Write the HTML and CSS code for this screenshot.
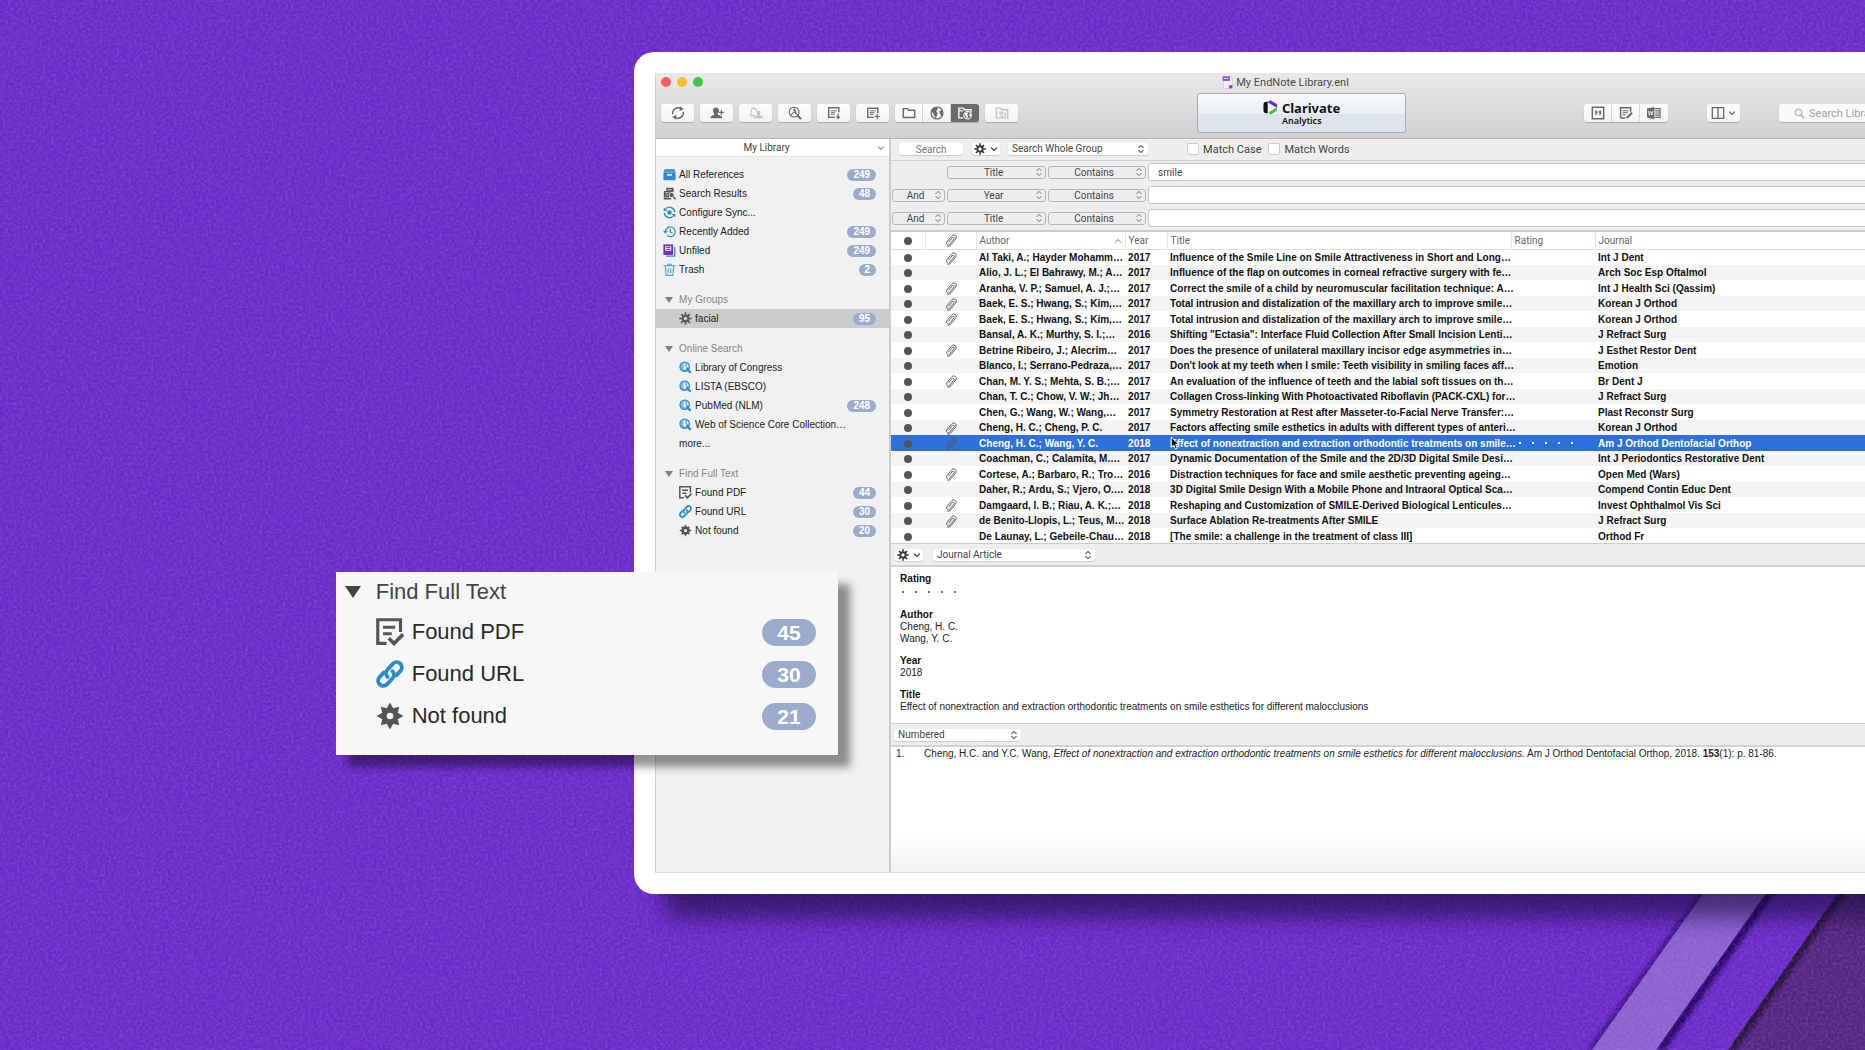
FILE: index.html
```
<!DOCTYPE html>
<html lang="en">
<head>
    <meta charset="UTF-8">
    <meta name="viewport" content="width=device-width, initial-scale=1.0">
    <title>My EndNote Library.enl</title>
    <link rel="stylesheet" href="styles.css">
</head>
<body>
    <!-- Icon sprite -->
    <svg class="sprite" aria-hidden="true">
        <symbol id="i-sync" viewBox="0 0 16 16"><path d="M2 9.500A6.200 6.200 0 0 1 11 2.700M14 6.500A6.200 6.200 0 0 1 5 13.300" fill="none" stroke="currentColor" stroke-width="1.700"/><path d="M10 .3l4.500 3.200L10 6zM6 15.700l-4.500-3.200L6 10z" fill="currentColor"/></symbol>
        <symbol id="i-adduser" viewBox="0 0 16 16"><path d="M6.800 1.600c2.200 0 3.500 1.600 3.500 3.600 0 1.500-.7 2.700-1.500 3.400v1.200l4 1.600c.9.4 1.200 1.200 1.200 2.600H.8c0-1.400.2-2.200 1.200-2.600L4.800 9.800V8.600C4 7.900 3.300 6.700 3.300 5.200c0-2 1.300-3.600 3.500-3.600z" fill="currentColor"/><path d="M13 4.500v5.500M10.300 7.200h5.500" stroke="currentColor" stroke-width="1.400"/></symbol>
        <symbol id="i-bell" viewBox="0 0 16 16"><path d="M1 11c1.500-1.500 1.300-3 1.500-5C2.700 3.500 4 2.500 5.500 2.500S8.300 3.500 8.500 6M1 11h6M4.500 13.200h2M5.500 1v1.500" fill="none" stroke="currentColor" stroke-width="1.300"/><path d="M11 5.500c1.300 0 2.100 1 2.100 2.200 0 1-.4 1.700-.9 2.100v.7l2.700 1c.8.300 1.100 1 1.100 2.500H6.500c0-1.500.3-2.200 1.100-2.500l2.200-1v-.7c-.5-.4-.9-1.100-.9-2.100 0-1.200.8-2.200 2.100-2.200z" fill="currentColor"/></symbol>
        <symbol id="i-find" viewBox="0 0 16 16"><g fill="none" stroke="currentColor"><circle cx="7" cy="7" r="5.600" stroke-width="1.300"/><path d="M7 1.500V7L2.500 11M7 7l4.500 3.500M7 3.500c2 1.500 2.500 3.500 2 5" stroke-width="1.200"/><path d="M10.500 10.500l4.500 4.500" stroke-width="2.400"/></g></symbol>
        <symbol id="i-docdown" viewBox="0 0 16 16"><g fill="none" stroke="currentColor"><path d="M9 13H2V2h11.500v5" stroke-width="1.600"/><path d="M4.500 5.500H11M4.500 7.500H9M4.500 9.500h4" stroke-width="1.100"/><path d="M12.800 8.500v5.500M10.800 12l2 2.200 2-2.200" stroke-width="1.300"/></g></symbol>
        <symbol id="i-docplus" viewBox="0 0 16 16"><g fill="none" stroke="currentColor"><path d="M9 13H2V2.500h11.500V8" stroke-width="1.600"/><path d="M4.500 5.500H11M4.500 7.500h5M4.500 9.500h4" stroke-width="1.100"/><path d="M12.800 9v6M9.800 12h6" stroke-width="1.400"/></g></symbol>
        <symbol id="i-folder" viewBox="0 0 16 16"><path d="M1.500 13.200V3h4.800l1.400 1.800h6.800v8.400z" fill="none" stroke="currentColor" stroke-width="1.700" stroke-linejoin="round"/></symbol>
        <symbol id="i-globe" viewBox="0 0 16 16"><circle cx="8" cy="8" r="6.800" fill="none" stroke="currentColor" stroke-width="1.500"/><path d="M2 5.500C3.200 3 5.500 1.600 8.200 1.800L9 4 6.800 5.800l2 2.200-.8 3-1.500 3L5 11 3.500 8.500zM10.500 6l3-1.500c1.200 2.500 1 5-.8 7.200l-1.500-2.900z" fill="currentColor"/></symbol>
        <symbol id="i-folderglobe" viewBox="0 0 16 16"><path d="M6 13.500H1V2.500h5l1.400 1.800H15v3" fill="none" stroke="currentColor" stroke-width="1.500"/><path d="M1 5.500h5" stroke="currentColor" stroke-width="1.300"/><circle cx="11" cy="10.500" r="4.300" fill="none" stroke="currentColor" stroke-width="1.200"/><path d="M7.500 8.500l3-1.500 1.200 1.500-1.500 1.300 1.600 1.700-1.300 2.700-1.700-2zM12.800 9l1.900-.5v3l-1.400.7z" fill="currentColor"/></symbol>
        <symbol id="i-folderdoc" viewBox="0 0 16 16"><path d="M1.500 13.500v-11h4.800l1.400 1.800h6.800v9.200z" fill="none" stroke="currentColor" stroke-width="1.500"/><path d="M4 7h5M4 9.200h2M7 8.200h5v3.300H7z" fill="none" stroke="currentColor" stroke-width="1.200"/></symbol>
        <symbol id="i-quote" viewBox="0 0 16 16"><path d="M1.500 1.500h13v13h-13z" fill="none" stroke="currentColor" stroke-width="1.700"/><path d="M4.600 5.500h2.600V8c0 1.500-.8 2.300-2.300 2.500V9.300c.6-.1.900-.5.900-1H4.600zM9 5.500h2.600V8c0 1.500-.8 2.300-2.300 2.500V9.300c.6-.1.900-.5.900-1H9z" fill="currentColor"/></symbol>
        <symbol id="i-edit" viewBox="0 0 16 16"><path d="M7 13.800H2.500L1.800 13V2h11.500v4.500" fill="none" stroke="currentColor" stroke-width="1.700"/><path d="M4 5.500h7M4 7.700h6M4 9.900h3.500" stroke="currentColor" stroke-width="1.200"/><path d="M14 6.800l1.800 1.800-5.300 5.200-2.500.9.700-2.600z" fill="currentColor"/></symbol>
        <symbol id="i-word" viewBox="0 0 16 16"><path d="M0 2.800L8.500 1v14L0 13.200z" fill="currentColor"/><path d="M1.500 5.500l1.200 5 1.500-4.500 1.500 4.500 1.200-5" fill="none" stroke="#f4f4f4" stroke-width="1"/><path d="M9 3h6v10H9M9.500 5.500H14M9.500 8H15M9.500 10.500H14" fill="none" stroke="currentColor" stroke-width="1.300"/></symbol>
        <symbol id="i-columns" viewBox="0 0 16 16"><path d="M1.500 1.800h13v12.400h-13zM8 2v12" fill="none" stroke="currentColor" stroke-width="1.500"/></symbol>
        <symbol id="i-search" viewBox="0 0 16 16"><path d="M10.200 10.200l4.600 4.600" stroke="currentColor" stroke-width="1.500"/><circle cx="6.500" cy="6.500" r="5" fill="none" stroke="currentColor" stroke-width="1.300"/></symbol>
        <symbol id="i-chevron" viewBox="0 0 8 8"><path d="M1.200 2.600L4 5.400l2.800-2.800" fill="none" stroke="currentColor" stroke-width="1.300"/></symbol>
        <symbol id="i-updown" viewBox="0 0 8 10"><path d="M1.500 3.800L4 1.400l2.500 2.400M1.500 6.200L4 8.600l2.500-2.400" fill="none" stroke="currentColor" stroke-width="1.100"/></symbol>
        <symbol id="i-gear" viewBox="0 0 16 16"><circle cx="8" cy="8" r="3.600" fill="none" stroke="currentColor" stroke-width="2.600"/><path d="M8 .3v3.200M8 12.500v3.200M.3 8h3.200M12.500 8h3.200M2.600 2.600l2.200 2.200M11.200 11.200l2.200 2.200M13.400 2.600l-2.200 2.200M4.800 11.200l-2.200 2.200" stroke="currentColor" stroke-width="2"/></symbol>
        <symbol id="i-star" viewBox="0 0 16 16"><path fill="currentColor" fill-rule="evenodd" d="M8 .3l1.800 3.300 3.500-.9-.9 3.500L15.700 8l-3.300 1.800.9 3.500-3.500-.9L8 15.700l-1.800-3.300-3.500.9.900-3.500L.3 8l3.300-1.800-.9-3.500 3.500.9zM8 6.100a1.900 1.900 0 1 0 0 3.800 1.900 1.900 0 0 0 0-3.800z"/></symbol>
        <symbol id="i-box" viewBox="0 0 16 16"><path d="M2 1.500h12l1.500 3H.5zM.5 5.300h15V14q0 1-1 1h-13q-1 0-1-1z" fill="#2e8bcb"/><path d="M5 8.500h6" stroke="#fff" stroke-width="1.800"/></symbol>
        <symbol id="i-results" viewBox="0 0 16 16"><path d="M4 1h9v5a4.500 4.500 0 0 0-5 7H1V5h3z" fill="#555"/><path d="M5.500 3.500h5M3 7h4M3 10h3" stroke="#f1f1f1"/><circle cx="10.500" cy="9.800" r="3" fill="#555" stroke="#f1f1f1" stroke-width=".8"/><path d="M12.500 12l3 3M1 14.500h9" stroke="#555" stroke-width="1.800"/></symbol>
        <symbol id="i-configure" viewBox="0 0 16 16"><path d="M3.600 3.300a6.400 6.400 0 0 1 10.800 4.200M12.400 12.700a6.400 6.400 0 0 1-10.800-4.200" fill="none" stroke="#2e8bcb" stroke-width="1.600"/><path d="M.8 1.500v4.700h4.700zM15.200 14.500V9.800h-4.700z" fill="#2e8bcb"/><circle cx="8" cy="8" r="2.800" fill="#2e8bcb"/></symbol>
        <symbol id="i-recent" viewBox="0 0 16 16"><path d="M3 8.500A6 6 0 1 1 5 12.800M9 4.500v4l2.800 1.700" fill="none" stroke="#2e8bcb" stroke-width="1.500"/><path d="M0 7h6l-3 3.700z" fill="#2e8bcb"/></symbol>
        <symbol id="i-unfiled" viewBox="0 0 16 16"><path d="M14.500 4v11H4" fill="none" stroke="#2e8bcb" stroke-width="1.600"/><path d="M.5.500h12v13H.5z" fill="#6b35b0"/><path d="M3.200 3.200h6.600v4.600H3.200zM3.200 5.500h6.600" fill="none" stroke="#fff" stroke-width="1"/></symbol>
        <symbol id="i-trash" viewBox="0 0 16 16"><path d="M.5 3.500h15M6 3V1.500h4V3M2.800 3.500l1 11.700h8.400l1-11.700M6.500 6.500v6M9.500 6.500v6" fill="none" stroke="#4ba0d8" stroke-width="1.300"/></symbol>
        <symbol id="i-online" viewBox="0 0 16 16"><circle cx="7" cy="7" r="6.200" fill="#7dbfe6"/><circle cx="7" cy="7" r="5.800" fill="none" stroke="#2e8bcb" stroke-width="1.400"/><path d="M6 3.500l1.500-.5v4L9.500 9 8 11 5.500 8.500zM10 4l1.500 1v3l-1.500-1z" fill="#fff"/><path d="M9 9l5.500 5.500" stroke="#2e8bcb" stroke-width="2.800"/></symbol>
        <symbol id="i-pdf" viewBox="0 0 16 16"><path d="M6 14.500H1V1h13v7" fill="none" stroke="#555" stroke-width="1.800"/><path d="M4 5.300h7M4 9h5" stroke="#555" stroke-width="1.700"/><path d="M7.300 11.600l3 3 5.200-5.300" fill="none" stroke="#555" stroke-width="2"/></symbol>
        <symbol id="i-link" viewBox="0 0 16 16"><g fill="none" stroke="#2e8bcb" stroke-width="2.200" stroke-linecap="round"><path d="M6.600 9.600a2.900 2.900 0 0 1 0-4.100l3-3.300a2.900 2.900 0 0 1 4.400 4L11.600 8.800"/><path d="M9.400 6.400a2.900 2.900 0 0 1 0 4.100l-3 3.300a2.900 2.900 0 0 1-4.400-4L4.400 7.200"/></g></symbol>
        <symbol id="i-clip" viewBox="0 0 12 13"><path d="M3.500 8.300L7.300 3.600a1 1 0 0 1 1.700 1.300L4.800 10.200a1.900 1.900 0 0 1-3-2.300L6.700 1.900a2.500 2.500 0 0 1 4 3.100L6 10.800c-1 1.300-2.600 1.800-3.800 1.200" fill="none" stroke="currentColor" stroke-width=".9"/></symbol>
        <symbol id="i-file" viewBox="0 0 16 16"><path d="M3 1h9l2 3v11.500H3z" fill="#f4f1fb" stroke="#c9bde6" stroke-width=".8"/><path d="M2 .5h9v5.500H2z" fill="#8a4be0"/><path d="M3.500 3h6" stroke="#fff"/><path d="M9 12l5-1v3l-3 2z" fill="#7a3be0"/></symbol>
        <symbol id="i-clarivate" viewBox="0 0 16 16"><path d="M5 2v12c-3 .5-4.500-.5-4.500-3V5C.5 2.500 2 1.500 5 2z" fill="#111"/><path d="M4.500 2L8 .2l7 4.300v3.800L11.200 6 8 4.200z" fill="#7a22e8"/><path d="M6 13l5-2.800 3.800-2.200v3.500L8 15.800z" fill="#45c520"/></symbol>
        <symbol id="i-sort" viewBox="0 0 8 8"><path d="M1 5.500L4 2.500l3 3" fill="none" stroke="currentColor"/></symbol>
    </svg>

    <!-- Diagonal ribbons, then paper grain over the whole background -->
    <svg class="ribbons" width="300" height="170" viewBox="0 0 300 170" aria-hidden="true">
        <filter id="soft" x="-20%" y="-20%" width="140%" height="140%"><feGaussianBlur stdDeviation="2.5"/></filter>
        <path d="M282 0h18v170H163z" fill="#54247f"/>
        <path d="M285 0L166 170" stroke="#150828" stroke-width="7" filter="url(#soft)"/>
        <path d="M148 0h134L163 170H27z" fill="#6b29c8"/>
        <path d="M214 0L95 170" stroke="#1c0058" stroke-width="8" filter="url(#soft)"/>
        <path d="M147 0L26 170" stroke="#2a0b70" stroke-width="5" filter="url(#soft)"/>
        <path d="M148 0h62L91 170H27z" fill="#8d60d0"/>
    </svg>
    <svg class="texture" aria-hidden="true">
        <filter id="grain" x="0" y="0" width="100%" height="100%">
            <feTurbulence type="fractalNoise" baseFrequency="0.35" numOctaves="4" seed="4"/>
            <feColorMatrix values="0 0 0 0 0.6  0 0 0 0 0.4  0 0 0 0 1  1.2 0 0 0 -0.4"/>
        </filter>
        <rect width="100%" height="100%" filter="url(#grain)"/>
    </svg>

    <main class="frame">
        <div class="window">
            <header class="titlebar">
                <div class="title-row">
                    <div class="lights"><span class="light red"></span><span class="light yellow"></span><span class="light green"></span></div>
                    <div class="doc-title"><svg class="icon"><use href="#i-file"/></svg><span>My EndNote Library.enl</span></div>
                </div>
                <div class="toolbar">
                    <div class="tools">
                        <button class="tool" aria-label="Sync"><svg class="icon"><use href="#i-sync"/></svg></button>
                        <button class="tool" aria-label="Share library"><svg class="icon"><use href="#i-adduser"/></svg></button>
                        <button class="tool" aria-label="Activity" disabled><svg class="icon"><use href="#i-bell"/></svg></button>
                        <button class="tool" aria-label="Find full text"><svg class="icon"><use href="#i-find"/></svg></button>
                        <button class="tool" aria-label="Import"><svg class="icon"><use href="#i-docdown"/></svg></button>
                        <button class="tool" aria-label="New reference"><svg class="icon"><use href="#i-docplus"/></svg></button>
                        <div class="segment">
                            <button class="tool" aria-label="Local library"><svg class="icon"><use href="#i-folder"/></svg></button>
                            <button class="tool" aria-label="Online search"><svg class="icon"><use href="#i-globe"/></svg></button>
                            <button class="tool active" aria-label="Integrated library"><svg class="icon"><use href="#i-folderglobe"/></svg></button>
                        </div>
                        <button class="tool" aria-label="Open folder" disabled><svg class="icon"><use href="#i-folderdoc"/></svg></button>
                    </div>
                    <div class="brand">
                        <svg class="icon"><use href="#i-clarivate"/></svg>
                        <div class="brand-name">Clarivate<small>Analytics</small></div>
                    </div>
                    <div class="tools right">
                        <div class="segment">
                            <button class="tool" aria-label="Insert citation"><svg class="icon"><use href="#i-quote"/></svg></button>
                            <button class="tool" aria-label="Format bibliography"><svg class="icon"><use href="#i-edit"/></svg></button>
                            <button class="tool" aria-label="Go to Word"><svg class="icon"><use href="#i-word"/></svg></button>
                        </div>
                        <button class="tool layout" aria-label="Layout"><svg class="icon"><use href="#i-columns"/></svg><svg class="chevron"><use href="#i-chevron"/></svg></button>
                        <label class="search-box"><svg class="icon"><use href="#i-search"/></svg><input type="text" placeholder="Search Library" aria-label="Search Library"></label>
                    </div>
                </div>
            </header>

            <div class="content">
                <aside class="sidebar">
                    <button class="library">My Library<svg class="chevron"><use href="#i-chevron"/></svg></button>
                    <ul class="list top">
                        <li><svg class="icon"><use href="#i-box"/></svg>All References<span class="badge">249</span></li>
                        <li><svg class="icon"><use href="#i-results"/></svg>Search Results<span class="badge">48</span></li>
                        <li><svg class="icon"><use href="#i-configure"/></svg>Configure Sync...</li>
                        <li><svg class="icon"><use href="#i-recent"/></svg>Recently Added<span class="badge">249</span></li>
                        <li><svg class="icon"><use href="#i-unfiled"/></svg>Unfiled<span class="badge">249</span></li>
                        <li><svg class="icon"><use href="#i-trash"/></svg>Trash<span class="badge">2</span></li>
                    </ul>
                    <h2 class="group">My Groups</h2>
                    <ul class="list nested">
                        <li class="current"><svg class="icon dark"><use href="#i-gear"/></svg>facial<span class="badge">95</span></li>
                    </ul>
                    <h2 class="group">Online Search</h2>
                    <ul class="list nested">
                        <li><svg class="icon"><use href="#i-online"/></svg>Library of Congress</li>
                        <li><svg class="icon"><use href="#i-online"/></svg>LISTA (EBSCO)</li>
                        <li><svg class="icon"><use href="#i-online"/></svg>PubMed (NLM)<span class="badge">248</span></li>
                        <li><svg class="icon"><use href="#i-online"/></svg>Web of Science Core Collection…</li>
                        <li>more...</li>
                    </ul>
                    <h2 class="group">Find Full Text</h2>
                    <ul class="list nested">
                        <li><svg class="icon"><use href="#i-pdf"/></svg>Found PDF<span class="badge">44</span></li>
                        <li><svg class="icon"><use href="#i-link"/></svg>Found URL<span class="badge">30</span></li>
                        <li><svg class="icon dark"><use href="#i-star"/></svg>Not found<span class="badge">20</span></li>
                    </ul>
                </aside>

                <section class="main">
                    <div class="search-bar">
                        <button class="small search-btn">Search</button>
                        <button class="small gear" aria-label="Search options"><svg class="icon"><use href="#i-gear"/></svg><svg class="chevron"><use href="#i-chevron"/></svg></button>
                        <div class="select scope"><select aria-label="Search scope"><option>Search Whole Group</option></select><svg><use href="#i-updown"/></svg></div>
                        <label class="check"><input type="checkbox">Match Case</label>
                        <label class="check"><input type="checkbox">Match Words</label>
                    </div>
                    <div class="criteria">
                        <div class="select outline field"><select aria-label="Field 1"><option>Title</option></select><svg><use href="#i-updown"/></svg></div>
                        <div class="select outline"><select aria-label="Comparison 1"><option>Contains</option></select><svg><use href="#i-updown"/></svg></div>
                        <input type="text" value="smile" aria-label="Search term 1">
                        <div class="select outline"><select aria-label="Operator 2"><option>And</option></select><svg><use href="#i-updown"/></svg></div>
                        <div class="select outline"><select aria-label="Field 2"><option>Year</option></select><svg><use href="#i-updown"/></svg></div>
                        <div class="select outline"><select aria-label="Comparison 2"><option>Contains</option></select><svg><use href="#i-updown"/></svg></div>
                        <input type="text" aria-label="Search term 2">
                        <div class="select outline"><select aria-label="Operator 3"><option>And</option></select><svg><use href="#i-updown"/></svg></div>
                        <div class="select outline"><select aria-label="Field 3"><option>Title</option></select><svg><use href="#i-updown"/></svg></div>
                        <div class="select outline"><select aria-label="Comparison 3"><option>Contains</option></select><svg><use href="#i-updown"/></svg></div>
                        <input type="text" aria-label="Search term 3">
                    </div>

                    <div class="references">
                        <table>
                            <colgroup>
                                <col class="c-dot"><col class="c-clip"><col class="c-author"><col class="c-year"><col class="c-title"><col class="c-rating"><col>
                            </colgroup>
                            <thead>
                                <tr><th><i class="dot"></i></th><th><svg class="clip"><use href="#i-clip"/></svg></th><th>Author<svg class="sort"><use href="#i-sort"/></svg></th><th>Year</th><th>Title</th><th>Rating</th><th>Journal</th></tr>
                            </thead>
                            <tbody>
                                <tr><td><i class="dot"></i></td><td><svg class="clip"><use href="#i-clip"/></svg></td><td>Al Taki, A.; Hayder Mohamm…</td><td>2017</td><td>Influence of the Smile Line on Smile Attractiveness in Short and Long…</td><td></td><td>Int J Dent</td></tr>
                                <tr><td><i class="dot"></i></td><td></td><td>Alio, J. L.; El Bahrawy, M.; A…</td><td>2017</td><td>Influence of the flap on outcomes in corneal refractive surgery with fe…</td><td></td><td>Arch Soc Esp Oftalmol</td></tr>
                                <tr><td><i class="dot"></i></td><td><svg class="clip"><use href="#i-clip"/></svg></td><td>Aranha, V. P.; Samuel, A. J.;…</td><td>2017</td><td>Correct the smile of a child by neuromuscular facilitation technique: A…</td><td></td><td>Int J Health Sci (Qassim)</td></tr>
                                <tr><td><i class="dot"></i></td><td><svg class="clip"><use href="#i-clip"/></svg></td><td>Baek, E. S.; Hwang, S.; Kim,…</td><td>2017</td><td>Total intrusion and distalization of the maxillary arch to improve smile…</td><td></td><td>Korean J Orthod</td></tr>
                                <tr><td><i class="dot"></i></td><td><svg class="clip"><use href="#i-clip"/></svg></td><td>Baek, E. S.; Hwang, S.; Kim,…</td><td>2017</td><td>Total intrusion and distalization of the maxillary arch to improve smile…</td><td></td><td>Korean J Orthod</td></tr>
                                <tr><td><i class="dot"></i></td><td></td><td>Bansal, A. K.; Murthy, S. I.;…</td><td>2016</td><td>Shifting "Ectasia": Interface Fluid Collection After Small Incision Lenti…</td><td></td><td>J Refract Surg</td></tr>
                                <tr><td><i class="dot"></i></td><td><svg class="clip"><use href="#i-clip"/></svg></td><td>Betrine Ribeiro, J.; Alecrim…</td><td>2017</td><td>Does the presence of unilateral maxillary incisor edge asymmetries in…</td><td></td><td>J Esthet Restor Dent</td></tr>
                                <tr><td><i class="dot"></i></td><td></td><td>Blanco, I.; Serrano-Pedraza,…</td><td>2017</td><td>Don't look at my teeth when I smile: Teeth visibility in smiling faces aff…</td><td></td><td>Emotion</td></tr>
                                <tr><td><i class="dot"></i></td><td><svg class="clip"><use href="#i-clip"/></svg></td><td>Chan, M. Y. S.; Mehta, S. B.;…</td><td>2017</td><td>An evaluation of the influence of teeth and the labial soft tissues on th…</td><td></td><td>Br Dent J</td></tr>
                                <tr><td><i class="dot"></i></td><td></td><td>Chan, T. C.; Chow, V. W.; Jh…</td><td>2017</td><td>Collagen Cross-linking With Photoactivated Riboflavin (PACK-CXL) for…</td><td></td><td>J Refract Surg</td></tr>
                                <tr><td><i class="dot"></i></td><td></td><td>Chen, G.; Wang, W.; Wang,…</td><td>2017</td><td>Symmetry Restoration at Rest after Masseter-to-Facial Nerve Transfer:…</td><td></td><td>Plast Reconstr Surg</td></tr>
                                <tr><td><i class="dot"></i></td><td><svg class="clip"><use href="#i-clip"/></svg></td><td>Cheng, H. C.; Cheng, P. C.</td><td>2017</td><td>Factors affecting smile esthetics in adults with different types of anteri…</td><td></td><td>Korean J Orthod</td></tr>
                                <tr class="selected"><td><i class="dot"></i></td><td><svg class="clip"><use href="#i-clip"/></svg></td><td>Cheng, H. C.; Wang, Y. C.</td><td>2018</td><td>Effect of nonextraction and extraction orthodontic treatments on smile…<svg class="cursor" viewBox="0 0 10 16"><path d="M1 1v11l2.700-2.300L5.500 14l2-.8-1.800-4.100H9z" fill="#111" stroke="#fff"/></svg></td><td><div class="stars"><i></i><i></i><i></i><i></i><i></i></div></td><td>Am J Orthod Dentofacial Orthop</td></tr>
                                <tr><td><i class="dot"></i></td><td></td><td>Coachman, C.; Calamita, M.…</td><td>2017</td><td>Dynamic Documentation of the Smile and the 2D/3D Digital Smile Desi…</td><td></td><td>Int J Periodontics Restorative Dent</td></tr>
                                <tr><td><i class="dot"></i></td><td><svg class="clip"><use href="#i-clip"/></svg></td><td>Cortese, A.; Barbaro, R.; Tro…</td><td>2016</td><td>Distraction techniques for face and smile aesthetic preventing ageing…</td><td></td><td>Open Med (Wars)</td></tr>
                                <tr><td><i class="dot"></i></td><td></td><td>Daher, R.; Ardu, S.; Vjero, O.…</td><td>2018</td><td>3D Digital Smile Design With a Mobile Phone and Intraoral Optical Sca…</td><td></td><td>Compend Contin Educ Dent</td></tr>
                                <tr><td><i class="dot"></i></td><td><svg class="clip"><use href="#i-clip"/></svg></td><td>Damgaard, I. B.; Riau, A. K.;…</td><td>2018</td><td>Reshaping and Customization of SMILE-Derived Biological Lenticules…</td><td></td><td>Invest Ophthalmol Vis Sci</td></tr>
                                <tr><td><i class="dot"></i></td><td><svg class="clip"><use href="#i-clip"/></svg></td><td>de Benito-Llopis, L.; Teus, M…</td><td>2018</td><td>Surface Ablation Re-treatments After SMILE</td><td></td><td>J Refract Surg</td></tr>
                                <tr><td><i class="dot"></i></td><td></td><td>De Launay, L.; Gebeile-Chau…</td><td>2018</td><td>[The smile: a challenge in the treatment of class III]</td><td></td><td>Orthod Fr</td></tr>
                            </tbody>
                        </table>
                    </div>

                    <div class="pane-bar">
                        <button class="small gear" aria-label="Reference options"><svg class="icon"><use href="#i-gear"/></svg><svg class="chevron"><use href="#i-chevron"/></svg></button>
                        <div class="select type"><select aria-label="Reference type"><option>Journal Article</option></select><svg><use href="#i-updown"/></svg></div>
                    </div>
                    <dl class="details">
                        <dt>Rating</dt>
                        <dd><div class="stars"><i></i><i></i><i></i><i></i><i></i></div></dd>
                        <dt>Author</dt>
                        <dd>Cheng, H. C.<br>Wang, Y. C.</dd>
                        <dt>Year</dt>
                        <dd>2018</dd>
                        <dt>Title</dt>
                        <dd>Effect of nonextraction and extraction orthodontic treatments on smile esthetics for different malocclusions</dd>
                    </dl>
                    <div class="pane-bar">
                        <div class="select style"><select aria-label="Output style"><option>Numbered</option></select><svg><use href="#i-updown"/></svg></div>
                    </div>
                    <div class="citation">
                        <span class="number">1.</span>
                        <p>Cheng, H.C. and Y.C. Wang, <em>Effect of nonextraction and extraction orthodontic treatments on smile esthetics for different malocclusions.</em> Am J Orthod Dentofacial Orthop, 2018. <b>153</b>(1): p. 81-86.</p>
                    </div>
                </section>
            </div>
        </div>
    </main>

    <!-- Enlarged callout -->
    <aside class="callout">
        <h2>Find Full Text</h2>
        <ul>
            <li><svg class="icon"><use href="#i-pdf"/></svg>Found PDF<span class="badge">45</span></li>
            <li><svg class="icon"><use href="#i-link"/></svg>Found URL<span class="badge">30</span></li>
            <li><svg class="icon dark"><use href="#i-star"/></svg>Not found<span class="badge">21</span></li>
        </ul>
    </aside>
</body>
</html>
```
FILE: styles.css
```
* {
    box-sizing: border-box;
}
body {
    position: relative;
    margin: 0;
    min-height: 100vh;
    padding-top: 52px;
    overflow: hidden;
    background-color: #6b29c8;
    font-family: "Liberation Sans", Arial, sans-serif;
    font-size: 10px;
    color: #222222;
}
ul, dl, dd, p, h2 {
    margin: 0;
    padding: 0;
    list-style: none;
}
button, input, select {
    margin: 0;
    border: none;
    font-family: Roboto, sans-serif;
    font-size: 10px;
    color: #444444;
}
.sprite {
    position: absolute;
    width: 0;
    height: 0;
}
.texture {
    position: absolute;
    top: 0;
    left: 0;
    width: 100%;
    height: 100%;
    opacity: 0.3;
}
.ribbons {
    position: absolute;
    right: 0;
    bottom: 0;
}
.icon {
    width: 13px;
    height: 13px;
    flex: none;
}
.icon.dark {
    color: #555555;
}
.chevron {
    width: 8px;
    height: 8px;
}

/* Window */
.frame {
    position: relative;
    margin: 0 -103px 0 34%;
    padding: 21px;
    background-color: #ffffff;
    border-radius: 20px;
    box-shadow: 28px 24px 22px rgba(24, 12, 60, 0.6);
}
.window {
    border-left: 1px solid #d4d0e4;
    border-bottom: 1px solid #dddddd;
}
.titlebar {
    height: 66px;
    background: linear-gradient(#e9e9e9, #d1d1d1);
    border-bottom: 1px solid #b4b4b4;
}
.title-row {
    display: grid;
    grid-template-columns: 1fr auto 1fr;
    align-items: center;
    height: 20px;
    padding: 0 0 2px 5px;
}
.lights {
    display: flex;
    gap: 6px;
}
.light {
    width: 10px;
    height: 10px;
    border-radius: 50%;
}
.red {
    background-color: #f9605a;
}
.yellow {
    background-color: #f6be2f;
}
.green {
    background-color: #3bc945;
}
.doc-title {
    display: flex;
    align-items: center;
    gap: 2px;
    padding-right: 38px;
    font-family: Roboto, sans-serif;
    font-size: 11px;
    color: #4a4a4a;
}
.toolbar {
    display: grid;
    grid-template-columns: 1fr 209px 1fr;
    align-items: center;
    height: 40px;
    padding: 0 5px;
}
.tools {
    display: flex;
    gap: 6px;
}
.tool {
    display: flex;
    align-items: center;
    justify-content: center;
    width: 33px;
    height: 18px;
    padding: 0;
    border-radius: 3px;
    background: linear-gradient(#fdfdfd, #f3f3f3);
    box-shadow: 0 1px 1px rgba(0, 0, 0, 0.2);
    color: #6a6a6a;
}
.tool .icon {
    width: 14px;
    height: 14px;
}
.tool:disabled {
    color: #c4c4c4;
}
.segment {
    display: flex;
}
.segment .tool {
    width: 28px;
    border-right: 1px solid #dddddd;
    border-radius: 0;
}
.segment .tool:first-child {
    border-radius: 3px 0 0 3px;
}
.segment .tool:last-child {
    border-right: none;
    border-radius: 0 3px 3px 0;
}
.segment .tool.active {
    background: #6a6a6a;
    color: #ffffff;
}
.tool.layout {
    gap: 3px;
    margin-left: 33px;
}
.brand {
    display: flex;
    justify-content: center;
    gap: 4px;
    height: 40px;
    padding-top: 6px;
    border: 1px solid #a9adb3;
    border-radius: 3px;
    background: linear-gradient(#f6f9fc, #eaeff5 52%, #dfe4ec 53%, #dde4ec);
    font-family: "Noto Sans", sans-serif;
    color: #111111;
}
.brand .icon {
    width: 15px;
    height: 15px;
}
.brand-name {
    font-size: 13px;
    font-weight: bold;
    line-height: 17px;
}
.brand-name small {
    display: block;
    font-size: 9px;
    font-weight: 600;
    line-height: 8px;
}
.tools.right {
    padding-left: 178px;
}
.search-box {
    display: flex;
    flex: 1;
    align-items: center;
    gap: 4px;
    height: 18px;
    margin-left: 33px;
    padding-left: 15px;
    border-radius: 3px;
    background-color: #fafafa;
    box-shadow: 0 1px 1px rgba(0, 0, 0, 0.2);
    color: #999999;
}
.search-box .icon {
    width: 11px;
    height: 11px;
}
.search-box input {
    width: 100px;
    padding: 0;
    background: none;
    font-size: 11px;
}
.search-box input::placeholder {
    color: #a0a0a0;
}
.content {
    display: grid;
    grid-template-columns: 235px 1fr;
}

/* Sidebar */
.sidebar {
    border-right: 2px solid #cccccc;
    background-color: #f1f1f1;
}
.library {
    display: grid;
    grid-template-columns: 1fr auto;
    align-items: center;
    width: 100%;
    height: 18px;
    padding: 0 4px 0 0;
    border-bottom: 1px solid #e4e4e4;
    background-color: #ffffff;
}
.library .chevron {
    color: #999999;
}
.list li {
    display: flex;
    align-items: center;
    gap: 3px;
    height: 19px;
    padding: 0 13px 0 7px;
}
.list.top {
    padding-top: 8px;
}
.list.nested li {
    padding-left: 23px;
}
.list .current {
    background-color: #cccccc;
}
.badge {
    margin-left: auto;
    padding: 0 6px;
    border-radius: 20px;
    background-color: #9aabcb;
    color: #ffffff;
    font-weight: bold;
    line-height: 12px;
}
.group {
    display: flex;
    align-items: center;
    gap: 6px;
    height: 19px;
    margin-top: 11px;
    padding-left: 9px;
    color: #858585;
    font-size: 10px;
    font-weight: normal;
}
.group::before, .callout h2::before {
    content: "";
    border: 4px solid transparent;
    border-top: 6px solid #808080;
    border-bottom: none;
}

/* Search controls */
.search-bar {
    display: flex;
    align-items: center;
    height: 22px;
    padding: 0 0 1px 8px;
    border-bottom: 1px solid #cfcfcf;
    background-color: #eeeeee;
}
.small {
    height: 12px;
    padding: 0;
    border-radius: 3px;
    background-color: #ffffff;
    box-shadow: 0 1px 1px rgba(0, 0, 0, 0.15);
}
.search-btn {
    width: 64px;
    margin-right: 9px;
    color: #777777;
}
.gear {
    display: flex;
    align-items: center;
    justify-content: center;
    gap: 4px;
    width: 28px;
    margin-right: 8px;
    color: #333333;
}
.gear .icon {
    width: 12px;
    height: 12px;
}
.select {
    display: grid;
    align-items: center;
}
.select > * {
    grid-area: 1 / 1;
}
.select svg {
    justify-self: end;
    width: 8px;
    height: 10px;
    margin-right: 3px;
    color: #555555;
    pointer-events: none;
}
select {
    width: 100%;
    height: 12px;
    padding: 0 4px;
    border-radius: 3px;
    background-color: #ffffff;
    box-shadow: 0 1px 1px rgba(0, 0, 0, 0.15);
    line-height: 12px;
    appearance: none;
}
.scope {
    width: 140px;
    margin-right: 39px;
}
.check {
    display: flex;
    align-items: center;
    gap: 4px;
    margin-right: 7px;
    font-family: Roboto, sans-serif;
    font-size: 11px;
    color: #444444;
}
.check input {
    width: 12px;
    height: 12px;
    border: 1px solid #cccccc;
    border-radius: 2px;
    background-color: #ffffff;
    appearance: none;
}
.criteria {
    display: grid;
    grid-template-columns: 53px 99px 98px 1fr;
    gap: 5px 2px;
    padding: 2px 0 3px 1px;
    border-bottom: 2px solid #cccccc;
    background-color: #eeeeee;
}
.criteria .field {
    grid-column: 2;
}
.criteria input {
    height: 18px;
    padding: 0 9px;
    border: 1px solid #c6c6c6;
    border-radius: 3px;
    background-color: #ffffff;
}
.outline select {
    height: 13px;
    padding: 0 18px 0 12px;
    border: 1px solid #b5b5b5;
    background-color: #eeeeee;
    box-shadow: none;
    line-height: 11px;
    text-align-last: center;
}
.outline svg {
    color: #999999;
}

/* Reference table */
.references {
    height: 311px;
    overflow: hidden;
    background-color: #ffffff;
}
table {
    width: 100%;
    table-layout: fixed;
    border-collapse: collapse;
}
.c-dot {
    width: 34px;
}
.c-clip {
    width: 51px;
}
.c-author {
    width: 149px;
}
.c-year {
    width: 42px;
}
.c-title {
    width: 344px;
}
.c-rating {
    width: 84px;
}
th, td {
    padding: 0 0 0 3px;
    text-align: left;
    white-space: nowrap;
}
th {
    height: 17px;
    border-bottom: 1px solid #dedede;
    border-left: 1px solid #e6e6e6;
    color: #666666;
    font-family: Roboto, sans-serif;
    font-weight: normal;
}
th:first-child {
    border-left: none;
}
td {
    height: 16px;
    color: #111111;
    font-weight: bold;
    line-height: 15px;
}
tr:nth-child(even) td {
    height: 15px;
}
tbody tr:nth-child(even) {
    background-color: #f4f4f4;
}
tbody tr.selected {
    background-color: #2e71dc;
}
.selected td {
    position: relative;
    color: #ffffff;
}
th:first-child, td:first-child, th:nth-child(2), td:nth-child(2) {
    padding: 0;
    text-align: center;
}
.dot {
    display: inline-block;
    width: 8px;
    height: 8px;
    border-radius: 50%;
    background-color: #555555;
    vertical-align: middle;
}
.clip {
    display: inline-block;
    width: 12px;
    height: 13px;
    color: #555555;
    vertical-align: middle;
}
.sort {
    float: right;
    width: 8px;
    height: 8px;
    margin: 2px 3px 0 0;
}
.cursor {
    position: absolute;
    top: 1px;
    left: 3px;
    width: 10px;
    height: 15px;
}
.stars {
    display: flex;
    align-items: center;
    gap: 11px;
    height: 14px;
    padding-left: 2px;
    color: #777777;
}
.stars i {
    width: 2px;
    height: 2px;
    background-color: currentColor;
}
td .stars {
    padding-left: 5px;
    color: #ffffff;
}

/* Detail panes */
.pane-bar {
    display: flex;
    align-items: center;
    height: 24px;
    padding-left: 3px;
    border-top: 1px solid #cccccc;
    border-bottom: 2px solid #d2d2d2;
    background-color: #eeeeee;
}
.pane-bar .gear {
    margin: 0 10px 0 1px;
}
.type {
    width: 162px;
}
.style {
    width: 127px;
}
.details {
    height: 156px;
    padding: 6px 9px 0;
    background-color: #ffffff;
    line-height: 12px;
}
.details dt {
    color: #111111;
    font-weight: bold;
}
.details dd {
    padding-bottom: 10px;
}
.citation {
    display: flex;
    min-height: 125px;
    padding-left: 5px;
    background: linear-gradient(#ffffff 70%, #f2f2f2);
    line-height: 13px;
}
.number {
    width: 28px;
}

/* Callout */
.callout {
    position: absolute;
    top: 572px;
    left: 18%;
    width: 502px;
    padding: 1px 22px 18px 9px;
    background-color: #f7f7f7;
    box-shadow: 12px 12px 8px rgba(0, 0, 0, 0.42);
    color: #2a2a2a;
    font-size: 22px;
}
.callout h2 {
    display: flex;
    align-items: center;
    gap: 15px;
    height: 38px;
    color: #444444;
    font-size: 22px;
    font-weight: normal;
}
.callout h2::before {
    border-width: 12px 8px 0;
    border-top-color: #444444;
}
.callout li {
    display: flex;
    align-items: center;
    gap: 8px;
    height: 42px;
    padding-left: 31px;
}
.callout .icon {
    width: 28px;
    height: 28px;
}
.callout .badge {
    padding: 0 15px;
    font-size: 21px;
    line-height: 27px;
}
```
